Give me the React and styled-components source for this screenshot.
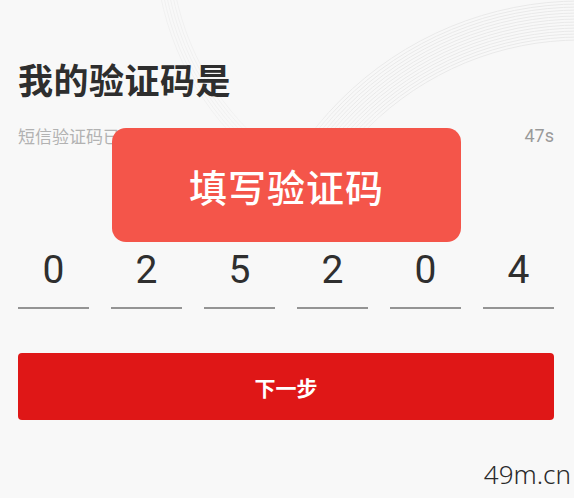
import React from "react";
import styled, { createGlobalStyle } from "styled-components";

const Global = createGlobalStyle`
  html, body { margin: 0; padding: 0; background: #f8f8f8; }
  body { font-family: "Noto Sans CJK SC", "Noto Sans", sans-serif; }
`;

const Page = styled.div`
  position: relative;
  width: 574px;
  height: 498px;
  overflow: hidden;
  background: #f8f8f8;
  box-sizing: border-box;
  padding: 55px 20px 0 18px;
  display: flex;
  flex-direction: column;
`;

const Deco = styled.svg`
  position: absolute;
  left: 0;
  top: 0;
  pointer-events: none;
`;

const Title = styled.h1`
  position: relative;
  margin: 0;
  font-size: 35px;
  line-height: 48px;
  font-weight: 700;
  color: #2e2e2e;
  letter-spacing: 0.5px;
`;

const SubRow = styled.div`
  position: relative;
  margin-top: 20px;
  display: flex;
  justify-content: space-between;
  align-items: center;
  height: 24px;
`;

const SubText = styled.span`
  font-size: 17px;
  color: #b2b2b2;
`;

const Timer = styled.span`
  font-family: Roboto, "Noto Sans", sans-serif;
  font-size: 18px;
  color: #9a9a9a;
`;

const CodeRow = styled.div`
  position: relative;
  margin-top: 103px;
  display: grid;
  grid-template-columns: repeat(6, 1fr);
  column-gap: 22px;
`;

const Cell = styled.div`
  display: flex;
  flex-direction: column;
  align-items: center;
`;

const Digit = styled.span`
  font-family: Roboto, "Noto Sans", sans-serif;
  font-weight: 400;
  font-size: 39px;
  line-height: 40px;
  color: #2f2f2f;
`;

const Underline = styled.div`
  margin-top: 17px;
  width: 100%;
  height: 2px;
  background: #949494;
`;

const NextButton = styled.button`
  position: relative;
  margin-top: 44px;
  height: 67px;
  width: 100%;
  border: none;
  border-radius: 4px;
  background: #df1717;
  color: #fff;
  font-family: "Noto Sans CJK SC", sans-serif;
  font-size: 21px;
  font-weight: 700;
  cursor: pointer;
`;

const Toast = styled.div`
  position: absolute;
  left: 112px;
  top: 128px;
  width: 349px;
  height: 114px;
  border-radius: 14px;
  background: #f4554a;
  display: flex;
  align-items: center;
  justify-content: center;
  color: #fff;
  font-size: 38px;
  font-weight: 500;
  letter-spacing: 1px;
`;

const Watermark = styled.span`
  position: absolute;
  right: 3px;
  bottom: 6px;
  font-family: "Noto Sans", "DejaVu Sans", sans-serif;
  font-weight: 300;
  font-size: 26px;
  color: #2a2a2a;
`;

const digits = ["0", "2", "5", "2", "0", "4"];

export default function App() {
  const rings = Array.from({ length: 14 }, (_, i) => 300 + i * 3);
  return (
    <>
      <Global />
      <Page>
        <Deco width="574" height="498" viewBox="0 0 574 498">
          <defs>
            <linearGradient id="fade" x1="0" y1="0" x2="0" y2="1">
              <stop offset="0" stopColor="#fff" />
              <stop offset="0.22" stopColor="#fff" />
              <stop offset="0.3" stopColor="#000" />
            </linearGradient>
            <mask id="m">
              <rect width="574" height="498" fill="url(#fade)" />
            </mask>
          </defs>
          <g mask="url(#m)">
            {rings.map((r) => (
              <circle key={r} cx="580" cy="340" r={r} fill="none" stroke="#e9e9e9" strokeWidth="1" />
            ))}
            {rings.slice(0, 6).map((r) => (
              <circle key={"b" + r} cx="440" cy="-60" r={r - 30} fill="none" stroke="#f0f0f0" strokeWidth="1" />
            ))}
          </g>
        </Deco>
        <Title>我的验证码是</Title>
        <SubRow>
          <SubText>短信验证码已发送至手机</SubText>
          <Timer>47s</Timer>
        </SubRow>
        <CodeRow>
          {digits.map((d, i) => (
            <Cell key={i}>
              <Digit>{d}</Digit>
              <Underline />
            </Cell>
          ))}
        </CodeRow>
        <NextButton>下一步</NextButton>
        <Toast>填写验证码</Toast>
        <Watermark>49m.cn</Watermark>
      </Page>
    </>
  );
}
